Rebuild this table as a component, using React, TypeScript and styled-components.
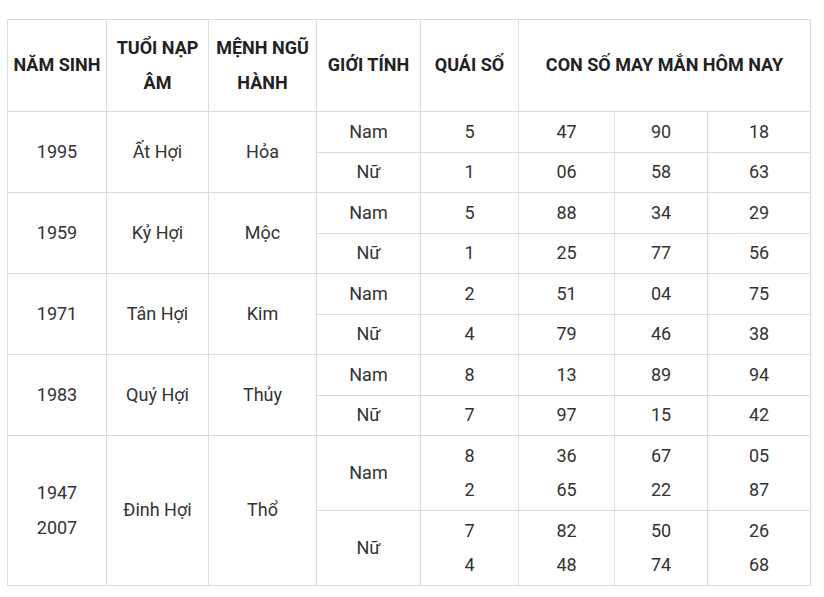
import React from 'react';
import styled, { createGlobalStyle } from 'styled-components';

const GlobalStyle = createGlobalStyle`
  html, body {
    margin: 0;
    padding: 0;
    background: #fff;
  }
  body {
    font-family: Roboto, "Liberation Sans", Arial, sans-serif;
  }
`;

const Page = styled.div`
  padding: 19px 0 0 7px;
`;

const Table = styled.table`
  border-collapse: collapse;
  table-layout: fixed;
  width: 803px;
  font-size: 18px;
  color: #333;
`;

const HeadCell = styled.th`
  border: 1px solid #ddd;
  padding: 11px 4px;
  line-height: 34.5px;
  font-weight: 700;
  color: #222;
  text-align: center;
  vertical-align: middle;
`;

const Cell = styled.td`
  border: 1px solid #ddd;
  padding: 2.5px 4px;
  line-height: 34.5px;
  font-weight: 400;
  text-align: center;
  vertical-align: middle;
`;

const Line = styled.div`
  line-height: 34.5px;
`;

type Sub = { gender: string; values: string[][] };
type Group = { years: string[]; tuoi: string; menh: string; subs: Sub[] };

const colWidths = [99, 102, 108, 104, 98, 96, 93, 103];

const groups: Group[] = [
  {
    years: ['1995'], tuoi: 'Ất Hợi', menh: 'Hỏa',
    subs: [
      { gender: 'Nam', values: [['5'], ['47'], ['90'], ['18']] },
      { gender: 'Nữ', values: [['1'], ['06'], ['58'], ['63']] },
    ],
  },
  {
    years: ['1959'], tuoi: 'Kỷ Hợi', menh: 'Mộc',
    subs: [
      { gender: 'Nam', values: [['5'], ['88'], ['34'], ['29']] },
      { gender: 'Nữ', values: [['1'], ['25'], ['77'], ['56']] },
    ],
  },
  {
    years: ['1971'], tuoi: 'Tân Hợi', menh: 'Kim',
    subs: [
      { gender: 'Nam', values: [['2'], ['51'], ['04'], ['75']] },
      { gender: 'Nữ', values: [['4'], ['79'], ['46'], ['38']] },
    ],
  },
  {
    years: ['1983'], tuoi: 'Quý Hợi', menh: 'Thủy',
    subs: [
      { gender: 'Nam', values: [['8'], ['13'], ['89'], ['94']] },
      { gender: 'Nữ', values: [['7'], ['97'], ['15'], ['42']] },
    ],
  },
  {
    years: ['1947', '2007'], tuoi: 'Đinh Hợi', menh: 'Thổ',
    subs: [
      { gender: 'Nam', values: [['8', '2'], ['36', '65'], ['67', '22'], ['05', '87']] },
      { gender: 'Nữ', values: [['7', '4'], ['82', '48'], ['50', '74'], ['26', '68']] },
    ],
  },
];

const Lines = ({ items }: { items: string[] }) => (
  <>
    {items.map((t, i) => (
      <Line key={i}>{t}</Line>
    ))}
  </>
);

export default function App() {
  return (
    <>
      <GlobalStyle />
      <Page>
        <Table>
          <colgroup>
            {colWidths.map((w, i) => (
              <col key={i} style={{ width: w }} />
            ))}
          </colgroup>
          <thead>
            <tr>
              <HeadCell>NĂM SINH</HeadCell>
              <HeadCell>TUỔI NẠP ÂM</HeadCell>
              <HeadCell>MỆNH NGŨ HÀNH</HeadCell>
              <HeadCell>GIỚI TÍNH</HeadCell>
              <HeadCell>QUÁI SỐ</HeadCell>
              <HeadCell colSpan={3}>CON SỐ MAY MẮN HÔM NAY</HeadCell>
            </tr>
          </thead>
          <tbody>
            {groups.map((g) =>
              g.subs.map((s, si) => (
                <tr key={g.years[0] + s.gender}>
                  {si === 0 && (
                    <>
                      <Cell rowSpan={g.subs.length}>
                        <Lines items={g.years} />
                      </Cell>
                      <Cell rowSpan={g.subs.length}>{g.tuoi}</Cell>
                      <Cell rowSpan={g.subs.length}>{g.menh}</Cell>
                    </>
                  )}
                  <Cell>{s.gender}</Cell>
                  {s.values.map((v, vi) => (
                    <Cell key={vi}>
                      <Lines items={v} />
                    </Cell>
                  ))}
                </tr>
              ))
            )}
          </tbody>
        </Table>
      </Page>
    </>
  );
}
